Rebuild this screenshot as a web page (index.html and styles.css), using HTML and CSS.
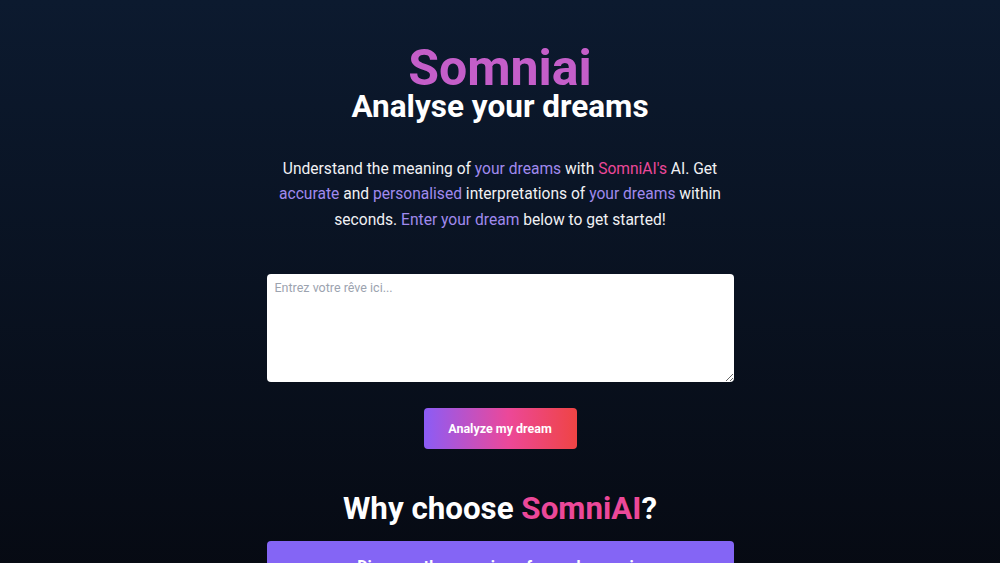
FILE: index.html
```html
<!DOCTYPE html>
<html lang="en">
<head>
  <meta charset="UTF-8">
  <meta name="viewport" content="width=device-width, initial-scale=1.0">
  <title>Somniai - Analyse your dreams</title>
  <link rel="stylesheet" href="styles.css">
</head>
<body>
  <div class="container">
    <header class="hero">
      <h1 class="brand">Somniai</h1>
      <h2 class="tagline">Analyse your dreams</h2>
    </header>

    <p class="intro">
      Understand the meaning of <span class="hl">your dreams</span> with
      <span class="pink">SomniAI's</span> AI. Get <span class="hl">accurate</span>
      and <span class="hl">personalised</span> interpretations of
      <span class="hl">your dreams</span> within seconds.
      <span class="hl">Enter your dream</span> below to get started!
    </p>

    <form id="dream-form" class="dream-form">
      <textarea id="dream-text" placeholder="Entrez votre rêve ici..."></textarea>
      <button type="button" onclick="analyzeDream()">Analyze my dream</button>
    </form>

    <h2 class="why">Why choose <span class="pink">SomniAI</span>?</h2>

    <div class="feature">
      <h3>Discover the meaning of your dreams in seconds</h3>
    </div>
  </div>

  <script>
    function analyzeDream() {
      const dream = document.getElementById("dream-text").value;
      if (dream === "") {
        alert("Please enter your dream first.");
        return;
      }
      alert("Analysing your dream...");
    }
  </script>
</body>
</html>
```

FILE: styles.css
```css
html {
  min-height: 100%;
  background: linear-gradient(to bottom, #0c1a2f, #060911);
}

body {
  font-family: Roboto, "Liberation Sans", sans-serif;
  color: #f3f4f6;
  margin: 0;
  padding: 0;
}

.container {
  max-width: 467px;
  margin: 0 auto;
  padding-top: 43px;
  display: flex;
  flex-direction: column;
  align-items: center;
}

.hero {
  text-align: center;
}

.brand {
  margin: 0;
  font-size: 50px;
  line-height: 1;
  font-weight: 700;
  color: #c45ec9;
}

.tagline {
  margin: -5px 0 0;
  font-size: 31.5px;
  line-height: 1.2;
  font-weight: 700;
  color: #ffffff;
}

.intro {
  max-width: 450px;
  margin: 31px 0 0;
  font-size: 15.6px;
  line-height: 25.5px;
  text-align: center;
  color: #f1f1f4;
}

.hl {
  color: #a08aee;
}

.pink {
  color: #ec4899;
}

.dream-form {
  width: 100%;
  margin-top: 41px;
  display: flex;
  flex-direction: column;
  align-items: center;
}

textarea {
  box-sizing: border-box;
  width: 100%;
  height: 108px;
  padding: 6px 8px;
  border: none;
  border-radius: 4px;
  background: #ffffff;
  font-family: inherit;
  font-size: 12.5px;
  color: #111827;
  resize: vertical;
}

textarea::placeholder {
  color: #9ca3af;
}

button {
  margin-top: 26px;
  width: 153px;
  height: 41px;
  border: none;
  border-radius: 4px;
  background: linear-gradient(to right, #8b5cf6, #ec4899 55%, #ef4444);
  color: #ffffff;
  font-family: inherit;
  font-size: 12.5px;
  font-weight: 700;
  cursor: pointer;
}

.why {
  margin: 41px 0 0;
  font-size: 31.3px;
  line-height: 1.2;
  font-weight: 700;
  color: #ffffff;
}

.feature {
  box-sizing: border-box;
  width: 100%;
  margin-top: 13px;
  padding: 16px 16px 14px;
  border-radius: 4px;
  background: #8465f5;
  text-align: center;
}

.feature h3 {
  max-width: 310px;
  margin: 0 auto;
  font-size: 16px;
  font-weight: 700;
  color: #ffffff;
}
```
